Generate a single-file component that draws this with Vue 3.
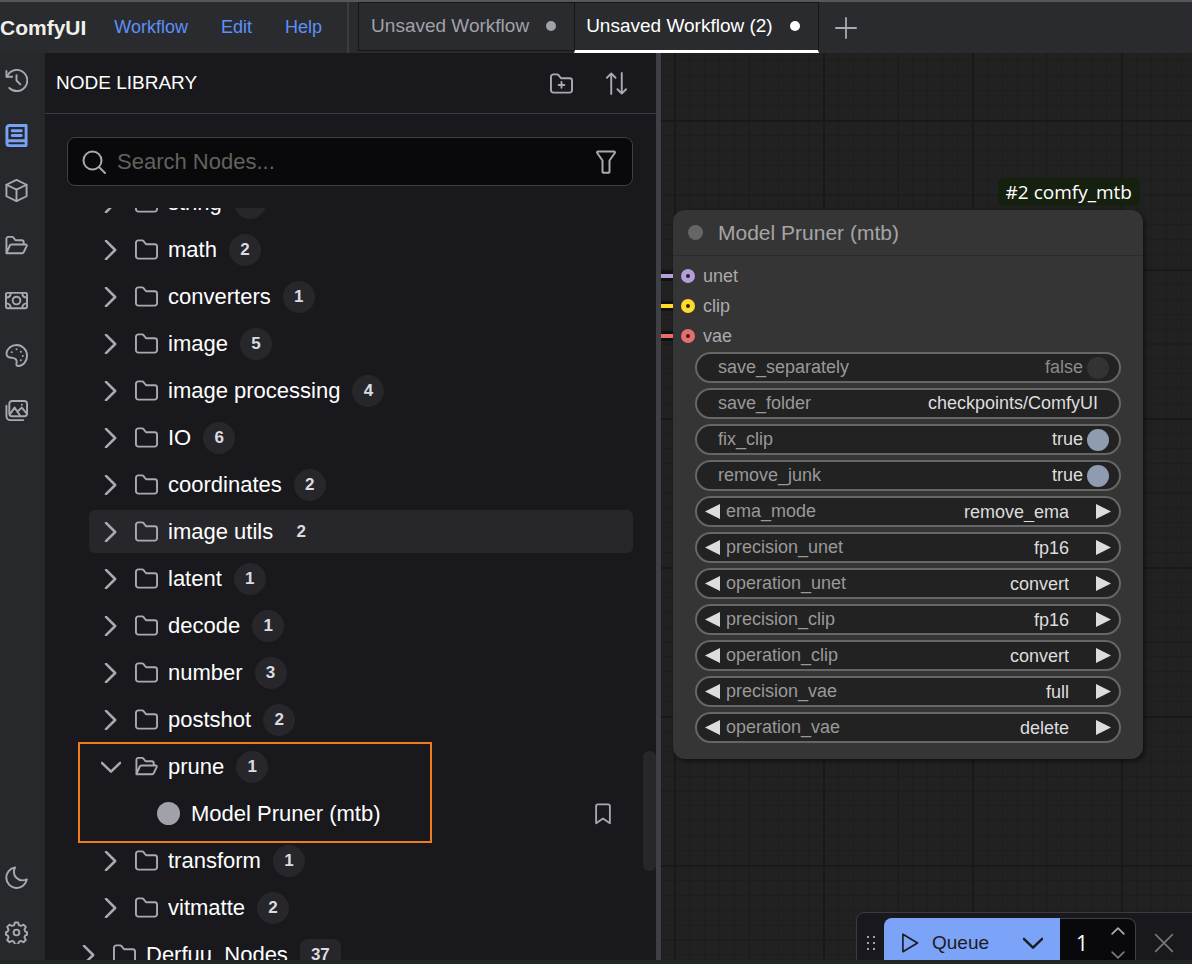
<template>
  <div class="app">
    <header class="topbar">
      <span class="brand">ComfyUI</span>
      <nav class="menu">
        <a v-for="item in menu" :key="item" href="#">{{ item }}</a>
      </nav>
      <div class="tabs">
        <button
          v-for="tab in tabs"
          :key="tab"
          class="tab"
          :class="{ active: tab === activeTab }"
          @click="activeTab = tab"
        >
          <span>{{ tab }}</span>
          <i class="dot"></i>
        </button>
      </div>
      <button class="icon-btn add-tab" aria-label="New workflow">
        <svg class="icon" viewBox="0 0 24 24"><path d="M12 1v22M1 12h22" /></svg>
      </button>
    </header>

    <main class="main">
      <aside class="rail">
        <button
          v-for="item in rail"
          :key="item.name"
          class="rail-btn"
          :class="{ selected: item.name === 'Node Library', bottom: item.bottom }"
          :aria-label="item.name"
        >
          <svg class="icon" viewBox="0 0 24 24"><path v-for="d in item.paths" :key="d" :d="d" /></svg>
        </button>
      </aside>

      <section class="panel">
        <div class="panel-header">
          <h2>NODE LIBRARY</h2>
          <button class="icon-btn" aria-label="New folder">
            <svg class="icon" viewBox="0 0 24 24">
              <path :d="icons.folder" />
              <path d="M12 10.5v6M9 13.5h6" />
            </svg>
          </button>
          <button class="icon-btn" aria-label="Sort">
            <svg class="icon" viewBox="0 0 24 24">
              <path d="M6.500 23V1.500M2 6l4.500-4.500L11 6M17.500 1v21.500M13 18l4.500 4.500L22 18" />
            </svg>
          </button>
        </div>

        <div class="search">
          <svg class="icon" viewBox="0 0 24 24"><circle cx="10.500" cy="10.500" r="9" /><path d="M17 17l6 6" /></svg>
          <input v-model="query" type="text" placeholder="Search Nodes..." aria-label="Search Nodes" />
          <button class="filter" aria-label="Filter">
            <svg class="icon" viewBox="0 0 24 24">
              <path d="M4 1.500h16c.8 0 1.300.8.800 1.500L15.500 10.500V22c0 .5-.3.800-.8.800H9.300c-.5 0-.8-.3-.8-.8V10.500L3.200 3c-.5-.7 0-1.500.8-1.500z" />
            </svg>
          </button>
        </div>

        <div class="tree-scroll">
          <ul class="tree">
            <li v-for="node in tree" :key="node.label" :class="{ root: node.root, marked: node.leaf }">
              <button class="row" :class="{ hovered: node.hovered }" :aria-expanded="!!node.leaf">
                <svg class="icon chevron" viewBox="0 0 24 24">
                  <path :d="node.leaf ? 'M1 7l11 10.5L23 7' : 'M6 1l11 11L6 23'" />
                </svg>
                <svg class="icon" viewBox="0 0 24 24">
                  <path :d="node.leaf ? icons.folderOpen : icons.folder" />
                </svg>
                <span>{{ node.label }}</span>
                <span class="count">{{ node.count }}</span>
              </button>
              <div v-if="node.leaf" class="leaf">
                <i class="leaf-dot"></i>
                <span>{{ node.leaf }}</span>
                <button class="bookmark" aria-label="Bookmark">
                  <svg class="icon" viewBox="0 0 24 24"><path d="M4.500 22V3.500a2 2 0 0 1 2-2h11a2 2 0 0 1 2 2V22L12 17z" /></svg>
                </button>
              </div>
            </li>
          </ul>
          <div class="scroll-thumb"></div>
        </div>
      </section>

      <div class="splitter"></div>

      <section class="canvas">
        <article class="node">
          <span class="node-badge">#2 comfy_mtb</span>
          <h3 class="node-title"><i></i>Model Pruner (mtb)</h3>
          <ul class="slots">
            <li v-for="slot in slots" :key="slot" :class="slot">{{ slot }}</li>
          </ul>
          <div class="widgets">
            <template v-for="w in widgets" :key="w.name">
              <label v-if="w.type === 'toggle'" class="widget">
                <span class="name">{{ w.name }}</span>
                <span class="value" :class="{ off: !w.value }">{{ w.value }}</span>
                <input v-model="w.value" type="checkbox" />
              </label>
              <label v-else-if="w.type === 'text'" class="widget">
                <span class="name">{{ w.name }}</span>
                <input v-model="w.value" type="text" />
              </label>
              <div v-else class="widget combo">
                <button aria-label="Previous"><svg viewBox="0 0 15 15"><path d="M15 0v15L0 7.500z" /></svg></button>
                <label class="name" :for="w.name">{{ w.name }}</label>
                <select :id="w.name" v-model="w.value">
                  <option>{{ w.value }}</option>
                </select>
                <button aria-label="Next"><svg viewBox="0 0 15 15"><path d="M0 0v15l15-7.500z" /></svg></button>
              </div>
            </template>
          </div>
        </article>

        <div class="queue">
          <i class="grip"></i>
          <button class="run">
            <svg class="icon" viewBox="0 0 24 24"><path d="M3.500 1.500v21L21 12z" /></svg>
            Queue
          </button>
          <button class="more" aria-label="Queue options">
            <svg class="icon" viewBox="0 0 24 24"><path d="M1 7l11 10.500L23 7" /></svg>
          </button>
          <div class="batch">
            <input v-model="batch" type="text" aria-label="Batch count" />
            <div class="spin">
              <button aria-label="Increase" @click="batch++">
                <svg class="icon" viewBox="0 0 24 24"><path d="M2 17L12 7l10 10" /></svg>
              </button>
              <button aria-label="Decrease" class="down" @click="batch--">
                <svg class="icon" viewBox="0 0 24 24"><path d="M2 7l10 10L22 7" /></svg>
              </button>
            </div>
          </div>
          <button class="close" aria-label="Cancel">
            <svg class="icon" viewBox="0 0 24 24"><path d="M2 2l20 20M22 2L2 22" /></svg>
          </button>
        </div>
      </section>
    </main>
  </div>
</template>

<script setup>
import { ref } from 'vue'

const menu = ['Workflow', 'Edit', 'Help']
const tabs = ['Unsaved Workflow', 'Unsaved Workflow (2)']
const activeTab = ref(tabs[1])
const query = ref('')
const batch = ref(1)

const icons = {
  folder: 'M1 19V5a2.500 2.500 0 0 1 2.500-2.500h4c.6 0 1 .2 1.400.7L11.500 6.500h9A2.500 2.500 0 0 1 23 9v10a2.500 2.500 0 0 1-2.500 2.500h-17A2.500 2.500 0 0 1 1 19z',
  folderOpen: 'M1.500 20V5a2 2 0 0 1 2-2h4c.6 0 1 .2 1.300.7L11 6.500h6.500a2 2 0 0 1 2 2V11M1.500 20L5 12c.3-.7.800-1 1.500-1h15c1 0 1.500.7 1.100 1.600L19.500 19c-.3.700-.8 1-1.500 1H1.500z',
}

const rail = [
  { name: 'Queue', paths: ['M1.500 2v6h6', 'M2 8A11 11 0 1 1 4.500 19.800', 'M12 6.500V12l4 4'] },
  { name: 'Node Library', paths: ['M22 17.500V1.500H4.500A2.500 2.500 0 0 0 2 4v16a2.500 2.500 0 0 0 2.500 2.500H22V17.500H4.500A2.500 2.500 0 0 0 2 20', 'M7.500 7h9.500M7.500 12h9.500'] },
  { name: 'Model Library', paths: ['M12 1L22.500 6v12L12 23 1.500 18V6z', 'M1.500 6L12 11l10.500-5M12 11v12'] },
  { name: 'Workflows', paths: [icons.folderOpen] },
  { name: 'Nodes Map', paths: ['M2.500 4h19A1.500 1.500 0 0 1 23 5.500v13a1.500 1.500 0 0 1-1.500 1.500h-19A1.500 1.500 0 0 1 1 18.500v-13A1.500 1.500 0 0 1 2.500 4z', 'M12 8a4 4 0 1 0 0 8 4 4 0 0 0 0-8z', 'M6 4.500A5 5 0 0 1 1.500 9M18 4.500A5 5 0 0 0 22.500 9M6 19.500A5 5 0 0 0 1.500 15M18 19.500a5 5 0 0 1 4.500-4.500'] },
  { name: 'Themes', paths: ['M1.500 10C2 5 6.500 1 12 1c6 0 11 5 11 11s-4 11-9 11c-2 0-2.500-1.300-2-3 .7-3-.5-5-4-5.500-4-.5-6.500-1-6.500-4.500z', 'M7 8.500h.1M12 5.500h.1M16.500 8h.1M18.500 12.500h.1M16.500 17h.1'] },
  { name: 'Gallery', paths: ['M7.500 2H20a3 3 0 0 1 3 3v10a3 3 0 0 1-3 3H7.500a3 3 0 0 1-3-3V5a3 3 0 0 1 3-3z', 'M1.500 7v11a4 4 0 0 0 4 4H19', 'M5 16l5-7 5.500 8M13 13l4.500-4 5 6', 'M17.500 6h.1'] },
  { name: 'Theme', bottom: true, paths: ['M10.500 1.500A10.800 10.800 0 1 0 22.800 14C14 17.500 6.500 10 10.500 1.500z'] },
  { name: 'Settings', paths: ['M10.300 1.500h3.400l.8 2.800 2.200.9 2.600-1.400 2.400 2.400-1.400 2.600.9 2.200 1.800.6v2.800l-1.800.6-.9 2.200 1.400 2.600-2.400 2.400-2.600-1.400-2.200.9-.8 2.800h-3.400l-.8-2.800-2.200-.9-2.600 1.400-2.400-2.400 1.400-2.600-.9-2.200-1.800-.6v-2.800l1.800-.6.9-2.200-1.400-2.600 2.400-2.400 2.600 1.400 2.200-.9z', 'M12 9a3 3 0 1 0 0 6 3 3 0 0 0 0-6z'] },
]

const tree = [
  { label: 'string', count: 4 },
  { label: 'math', count: 2 },
  { label: 'converters', count: 1 },
  { label: 'image', count: 5 },
  { label: 'image processing', count: 4 },
  { label: 'IO', count: 6 },
  { label: 'coordinates', count: 2 },
  { label: 'image utils', count: 2, hovered: true },
  { label: 'latent', count: 1 },
  { label: 'decode', count: 1 },
  { label: 'number', count: 3 },
  { label: 'postshot', count: 2 },
  { label: 'prune', count: 1, leaf: 'Model Pruner (mtb)' },
  { label: 'transform', count: 1 },
  { label: 'vitmatte', count: 2 },
  { label: 'Derfuu_Nodes', count: 37, root: true },
]

const slots = ['unet', 'clip', 'vae']

const widgets = ref([
  { name: 'save_separately', type: 'toggle', value: false },
  { name: 'save_folder', type: 'text', value: 'checkpoints/ComfyUI' },
  { name: 'fix_clip', type: 'toggle', value: true },
  { name: 'remove_junk', type: 'toggle', value: true },
  { name: 'ema_mode', value: 'remove_ema' },
  { name: 'precision_unet', value: 'fp16' },
  { name: 'operation_unet', value: 'convert' },
  { name: 'precision_clip', value: 'fp16' },
  { name: 'operation_clip', value: 'convert' },
  { name: 'precision_vae', value: 'full' },
  { name: 'operation_vae', value: 'delete' },
])
</script>

<style>
body { background: #1f2623; overflow: hidden; }
</style>

<style scoped>
*, *::before, *::after { box-sizing: border-box; }
.app { display: flex; flex-direction: column; height: 100vh; padding-bottom: 4px; background: #1f2623; color: #fff; font-family: "Liberation Sans", Arial, sans-serif; }
button, input, select { margin: 0; padding: 0; border: 0; background: none; color: inherit; font: inherit; outline: none; }
button { display: flex; align-items: center; justify-content: center; cursor: pointer; }
ul { margin: 0; padding: 0; list-style: none; }
.icon { width: 24px; height: 24px; flex: none; fill: none; stroke: #a9a9b0; stroke-width: 2; stroke-linecap: round; stroke-linejoin: round; }

.topbar { display: flex; flex: none; height: 53px; border-top: 2px solid #55575a; background: #2a2b2e; }
.brand { align-self: center; font-size: 21px; font-weight: 700; color: #f0f0ea; }
.menu { display: flex; align-items: center; gap: 33px; padding: 0 25px 0 28px; border-right: 2px solid #3b3c40; font-size: 18px; }
.menu a { color: #5d90f8; text-decoration: none; }
.tabs { display: flex; margin-left: 9px; }
.tab { gap: 17px; height: 49px; padding: 0 18px 2px 12px; border: 2px solid #151517; border-width: 1px 0 1px 1px; color: #a1a1aa; font-size: 19px; }
.tab .dot { width: 10px; height: 10px; border-radius: 50%; background: currentColor; }
.tab.active { height: 51px; padding-left: 11px; border-right-width: 1px; border-bottom: 3px solid #fff; color: #fff; }
.icon-btn { width: 55px; }
.add-tab .icon { width: 22px; height: 22px; }

.main { display: flex; flex: 1; min-height: 0; }
.rail { display: flex; flex-direction: column; flex: none; width: 45px; background: #27282b; }
.rail-btn { justify-content: flex-start; height: 55px; padding-left: 5px; }
.rail-btn.bottom { margin-top: auto; }
.rail-btn.bottom + .bottom { margin-top: 0; }
.rail-btn .icon { width: 23px; height: 23px; }
.rail-btn.selected .icon { stroke: #78a2f8; stroke-width: 3; }

.panel { display: flex; flex-direction: column; flex: none; width: 611px; background: #19191d; }
.panel-header { display: flex; flex: none; height: 61px; padding: 0 12px 0 11px; border-bottom: 1px solid #3c3c42; }
.panel-header h2 { flex: 1; align-self: center; margin: 0; font-size: 19px; font-weight: 400; }
.panel-header .icon { width: 23px; height: 23px; }
.search { display: flex; align-items: center; gap: 11px; flex: none; height: 49px; margin: 23px 23px 23px 22px; padding: 0 14px; border: 1px solid #3f3f46; border-radius: 8px; background: #09090b; }
.search .icon { display: block; width: 24px; height: 24px; }
.search input { flex: 1; font-size: 22px; }
.search input::placeholder { color: #62625e; opacity: 1; }

.tree-scroll { position: relative; flex: 1; min-height: 0; margin-top: -1px; overflow: hidden; }
.tree { display: flex; flex-direction: column; gap: 4px; margin: -27px 23px 0 22px; font-size: 22px; }
.tree li { margin-left: 22px; }
.tree li.root { margin-left: 0; }
.row { justify-content: flex-start; width: 100%; height: 43px; padding-left: 10px; border-radius: 6px; }
.row .icon { width: 23px; height: 23px; margin-right: 10px; }
.row .chevron { width: 20px; height: 20px; margin: 0 14px 0 2px; stroke-width: 3; }
.row.hovered { background: #27272b; }
.row .count { min-width: 32px; margin-left: 12px; padding: 0 11px; border-radius: 16px; background: #27272b; color: #dcdce0; font-size: 17px; font-weight: 700; line-height: 32px; text-align: center; }
.root .count { border-radius: 8px; }
.marked { position: relative; }
.marked::after { content: ""; position: absolute; top: -3px; left: -11px; width: 354px; height: 101px; border: 2px solid #ee7d20; pointer-events: none; }
.leaf { display: flex; align-items: center; height: 43px; margin-top: 4px; padding: 0 19px 0 68px; }
.leaf-dot { width: 23px; height: 23px; margin-right: 11px; border-radius: 50%; background: #a1a1aa; }
.bookmark { margin-left: auto; }
.bookmark .icon { width: 22px; height: 22px; }
.scroll-thumb { position: absolute; top: 543px; right: 0; width: 13px; height: 120px; border-radius: 6px; background: #27272b; }
.splitter { flex: none; width: 5px; background: #3f3f46; }

.canvas {
  position: relative; flex: 1; overflow: hidden; background-color: #212121;
  background-image:
    linear-gradient(90deg, #191919 2px, transparent 2px),
    linear-gradient(#191919 2px, transparent 2px),
    repeating-linear-gradient(90deg, #1d1d1d 0 1px, transparent 1px 10%),
    repeating-linear-gradient(#1d1d1d 0 1px, transparent 1px 10%);
  background-size: 149px 149px; background-position: 13px 67px;
}
.node { position: absolute; top: 157px; left: 12px; width: 470px; padding-bottom: 16px; border-radius: 12px; background: #353535; box-shadow: 2px 2px 4px rgba(0,0,0,.5); font-size: 18px; }
.node-badge { position: absolute; right: 3px; bottom: 100%; margin-bottom: 4px; padding: 0 8px; border-radius: 6px; background: #16200f; color: #fff; font-family: "Open Sans", sans-serif; font-size: 19px; line-height: 28px; }
.node-title { display: flex; align-items: center; gap: 15px; height: 46px; margin: 0; padding-left: 15px; border-bottom: 1px solid #2a2a2a; color: #a5a5a5; font-size: 21px; font-weight: 400; }
.node-title i { width: 15px; height: 15px; border-radius: 50%; background: #666; }
.slots { padding: 5px 0 1px; color: #aaa; }
.slots li { display: flex; position: relative; align-items: center; gap: 8px; height: 30px; padding-left: 8px; }
.slots li::before { content: ""; width: 14px; height: 14px; border: 5px solid var(--link); border-radius: 50%; background: #222; }
.slots li::after { content: ""; position: absolute; left: -12px; width: 12px; height: 10px; border: solid #111; border-width: 3px 0; background: var(--link); }
.slots .unet { --link: #b39ddb; }
.slots .clip { --link: #ffd92e; }
.slots .vae { --link: #e86e6e; }

.widgets { display: flex; flex-direction: column; gap: 5px; padding: 0 22px; }
.widget { display: flex; align-items: center; height: 31px; padding: 0 10px 0 21px; border: 2px solid #666; border-radius: 16px; background: #222; color: #ddd; }
.widget .name { color: #999; }
.widget .value { margin-left: auto; }
.widget .off { color: #8a8a8a; }
.widget input[type="checkbox"] { appearance: none; width: 22px; height: 22px; margin-left: 4px; border-radius: 50%; background: #333; }
.widget input[type="checkbox"]:checked { background: #8f9bb0; }
.widget input[type="text"] { flex: 1; min-width: 0; padding-right: 11px; text-align: right; }
.widget.combo { padding: 0 8px; }
.combo .name { margin-left: 6px; }
.combo svg { width: 15px; height: 15px; fill: #ddd; }
.combo select { flex: 1; min-width: 0; margin-right: 27px; appearance: none; text-align: right; text-align-last: right; }

.queue { display: flex; position: absolute; right: -1px; bottom: -14px; height: 62px; padding: 5px 18px 5px 8px; border: 1px solid #3a3a40; border-radius: 8px 0 0 0; background: #19191d; }
.grip { align-self: center; width: 12px; height: 18px; margin-right: 7px; background: radial-gradient(circle, #a1a1aa 1px, transparent 1px) 0 0 / 6px 6px; }
.run, .more { background: #7ba3f8; color: #1c1c1f; font-size: 19px; }
.run { gap: 12px; width: 121px; border-radius: 8px 0 0 0; }
.run .icon, .more .icon { width: 20px; height: 20px; stroke: #1c1c1f; }
.more { width: 55px; }
.more .icon { stroke-width: 3; }
.batch { display: flex; width: 76px; border: 1px solid #3f3f46; border-left: 0; border-radius: 0 8px 0 0; background: #09090b; }
.batch input { width: 40px; padding-left: 4px; font-family: "Open Sans", sans-serif; font-size: 21px; text-align: center; }
.spin { display: flex; flex: 1; flex-direction: column; }
.spin button { flex: 1; }
.spin .icon { width: 14px; height: 14px; stroke-width: 3; }
.spin .down .icon, .close .icon { stroke: #77777c; }
.close { margin-left: 18px; }
.close .icon { width: 20px; height: 20px; }
</style>
